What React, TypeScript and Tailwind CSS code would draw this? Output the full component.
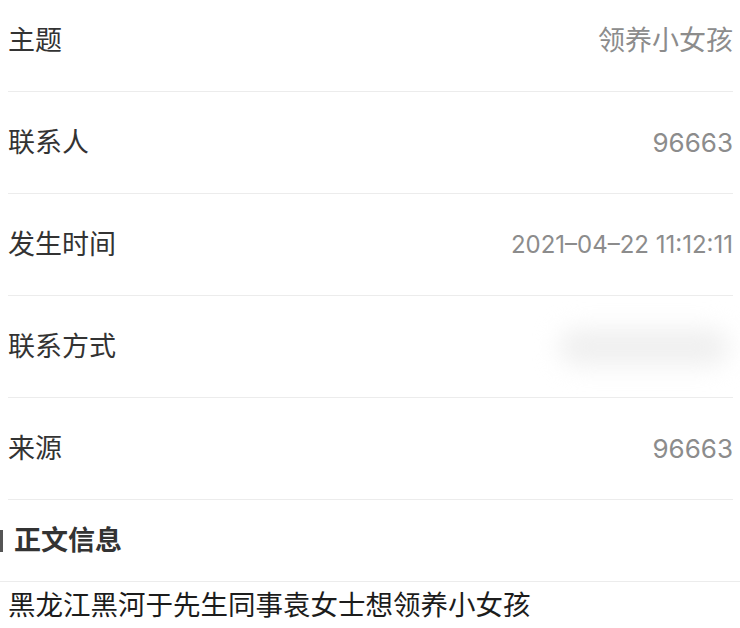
const rows = [
  { label: '主题', value: '领养小女孩', size: 'text-[27px]' },
  { label: '联系人', value: '96663', size: 'text-[26px]' },
  { label: '发生时间', value: '2021–04–22 11:12:11', size: 'text-[24px]' },
  { label: '联系方式', value: null, size: '' },
  { label: '来源', value: '96663', size: 'text-[26px]' },
];

const cjk = "font-['Inter','Noto_Sans_CJK_SC',sans-serif]";

function InfoRow({ label, value, size }: { label: string; value: string | null; size: string }) {
  return (
    <div className="mx-2 mr-[7px] h-[102px] flex items-center justify-between border-b border-[#ececec]">
      <span className="text-[27px] text-[#333] leading-none">{label}</span>
      {value === null ? (
        <div className="w-[170px] h-[36px] mr-1 rounded-full bg-[#efefef] blur-md" />
      ) : (
        <span className={`${size} text-[#8c8c8c] leading-none`}>{value}</span>
      )}
    </div>
  );
}

export default function App() {
  return (
    <div className={`w-[740px] h-[628px] bg-white overflow-hidden ${cjk}`}>
      <div className="-mt-[10px]">
        {rows.map(r => (
          <InfoRow key={r.label} label={r.label} value={r.value} size={r.size} />
        ))}
      </div>

      {/* 正文信息 */}
      <div className="h-[82px] flex items-center gap-[11px] border-b border-[#ececec]">
        <div className="w-[3px] h-[22px] bg-[#555]" />
        <span className="text-[27px] font-semibold text-[#333] leading-none">正文信息</span>
      </div>
      <div className="px-2 pt-[10px]">
        <p className="text-[27.5px] text-[#1c1c1c] leading-none">黑龙江黑河于先生同事袁女士想领养小女孩</p>
      </div>
    </div>
  );
}
